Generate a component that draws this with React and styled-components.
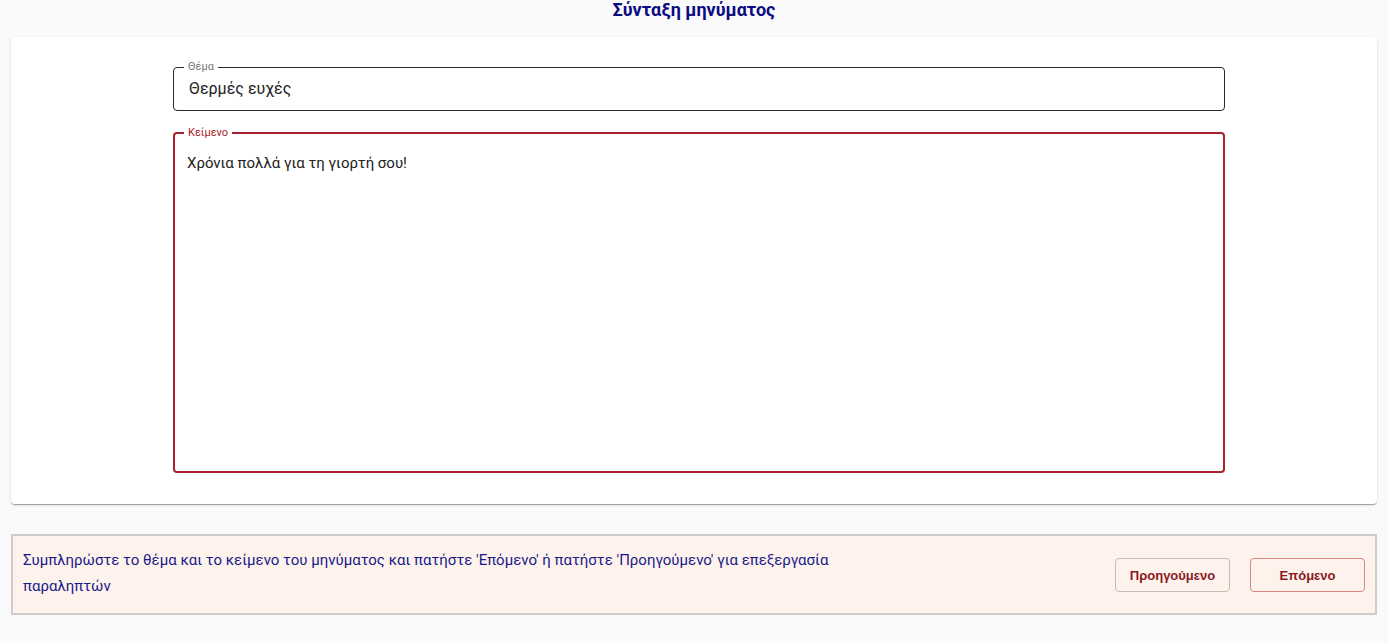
import React, { useState } from 'react';
import styled, { createGlobalStyle } from 'styled-components';

const GlobalStyle = createGlobalStyle`
  html, body {
    margin: 0;
    padding: 0;
    background: #fafafa;
    font-family: Roboto, "Noto Sans", sans-serif;
  }
`

const Page = styled.div`
  display: flex;
  flex-direction: column;
  padding: 0 11px;
`

const Title = styled.h2`
  margin: 0 0 17px;
  height: 20px;
  font-size: 18px;
  line-height: 20px;
  font-weight: 700;
  color: #0b0b82;
  text-align: center;
`

const Card = styled.div`
  background: #fff;
  border-radius: 4px;
  box-shadow: 0px 2px 1px -1px rgba(0, 0, 0, 0.2), 0px 1px 1px 0px rgba(0, 0, 0, 0.14), 0px 1px 3px 0px rgba(0, 0, 0, 0.12);
  padding: 24px 152px 31px 162px;
  display: flex;
  flex-direction: column;
  gap: 16px;
`

const Field = styled.fieldset`
  margin: 0;
  min-width: 0;
  padding: ${p => p.$focused ? '0 12px 12px' : '0 14px 7px 15px'};
  border: ${p => p.$focused ? '2px solid #a8232a' : '1px solid #2b2b2b'};
  border-radius: 4px;
  display: flex;
  flex-direction: column;
`

const Label = styled.legend`
  margin-left: ${p => p.$focused ? '-3px' : '-5px'};
  padding: 0 4px;
  font-size: 11px;
  line-height: 12px;
  color: ${p => p.$focused ? '#a8232a' : '#777'};
`

const Input = styled.input`
  border: none;
  outline: none;
  background: transparent;
  padding: 0;
  height: 30px;
  font-family: Roboto, "Noto Sans", sans-serif;
  font-size: 16px;
  color: #222;
`

const TextArea = styled.textarea`
  border: none;
  outline: none;
  resize: none;
  background: transparent;
  box-sizing: border-box;
  height: 320px;
  padding: 14px 0 0;
  font-family: Roboto, "Noto Sans", sans-serif;
  font-size: 15px;
  line-height: 20px;
  color: #222;
`

const Footer = styled.div`
  margin-top: 30px;
  height: 77px;
  box-sizing: content-box;
  border: 2px solid #cfcccb;
  background: #fdf3ec;
  display: flex;
  align-items: center;
  justify-content: space-between;
  padding: 0 10px;
`

const Hint = styled.p`
  margin: 0;
  flex: 0 1 820px;
  font-size: 15px;
  line-height: 26px;
  color: #1a1a8a;
  position: relative;
  top: -2px;
`

const Actions = styled.div`
  display: flex;
  gap: 20px;
  margin-top: 1px;
`

const Button = styled.button`
  width: 115px;
  height: 34px;
  border-radius: 4px;
  background: transparent;
  border: 1px solid ${p => p.$primary ? '#dc8585' : '#cdb9b1'};
  font-family: "Liberation Sans", Arial, sans-serif;
  font-weight: 700;
  font-size: 13px;
  color: #8a1a1f;
  cursor: pointer;
`

export default function App() {
  const [subject, setSubject] = useState('Θερμές ευχές');
  const [body, setBody] = useState('Χρόνια πολλά για τη γιορτή σου!');

  return (
    <Page>
      <GlobalStyle />
      <Title>Σύνταξη μηνύματος</Title>
      <Card>
        <Field>
          <Label>Θέμα</Label>
          <Input value={subject} onChange={e => setSubject(e.target.value)} />
        </Field>
        <Field $focused>
          <Label $focused>Κείμενο</Label>
          <TextArea value={body} onChange={e => setBody(e.target.value)} />
        </Field>
      </Card>
      <Footer>
        <Hint>
          Συμπληρώστε το θέμα και το κείμενο του μηνύματος και πατήστε 'Επόμενο' ή πατήστε 'Προηγούμενο' για επεξεργασία παραληπτών
        </Hint>
        <Actions>
          <Button>Προηγούμενο</Button>
          <Button $primary>Επόμενο</Button>
        </Actions>
      </Footer>
    </Page>
  );
}
